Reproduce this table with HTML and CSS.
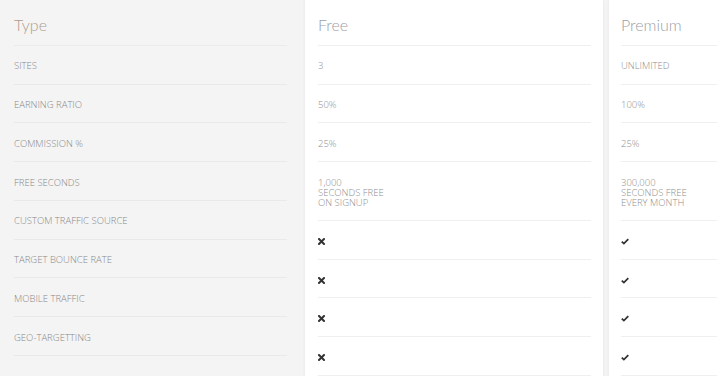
FILE: index.html
```html
<!DOCTYPE html>
<html>
<head>
<meta charset="utf-8">
<link rel="stylesheet" href="styles.css">
</head>
<body>
<div class="table">
  <div class="col col-type">
    <div class="head head-type">Type</div>
    <div class="row">SITES</div>
    <div class="row">EARNING RATIO</div>
    <div class="row">COMMISSION %</div>
    <div class="row">FREE SECONDS</div>
    <div class="row">CUSTOM TRAFFIC SOURCE</div>
    <div class="row">TARGET BOUNCE RATE</div>
    <div class="row">MOBILE TRAFFIC</div>
    <div class="row">GEO-TARGETTING</div>
  </div>
  <div class="col card">
    <div class="head">Free</div>
    <div class="row">3</div>
    <div class="row">50%</div>
    <div class="row">25%</div>
    <div class="row">1,000<br>SECONDS FREE<br>ON SIGNUP</div>
    <div class="row"><svg class="ico" viewBox="0 0 7 7"><path d="M1 1L6 6M6 1L1 6" /></svg></div>
    <div class="row"><svg class="ico" viewBox="0 0 7 7"><path d="M1 1L6 6M6 1L1 6" /></svg></div>
    <div class="row"><svg class="ico" viewBox="0 0 7 7"><path d="M1 1L6 6M6 1L1 6" /></svg></div>
    <div class="row"><svg class="ico" viewBox="0 0 7 7"><path d="M1 1L6 6M6 1L1 6" /></svg></div>
  </div>
  <div class="col card">
    <div class="head">Premium</div>
    <div class="row">UNLIMITED</div>
    <div class="row">100%</div>
    <div class="row">25%</div>
    <div class="row">300,000<br>SECONDS FREE<br>EVERY MONTH</div>
    <div class="row"><svg class="ico chk" viewBox="0 0 8 7"><path d="M0.8 3.6L2.9 5.6L7.3 1.2" /></svg></div>
    <div class="row"><svg class="ico chk" viewBox="0 0 8 7"><path d="M0.8 3.6L2.9 5.6L7.3 1.2" /></svg></div>
    <div class="row"><svg class="ico chk" viewBox="0 0 8 7"><path d="M0.8 3.6L2.9 5.6L7.3 1.2" /></svg></div>
    <div class="row"><svg class="ico chk" viewBox="0 0 8 7"><path d="M0.8 3.6L2.9 5.6L7.3 1.2" /></svg></div>
  </div>
</div>
</body>
</html>
```
FILE: styles.css
```css
html, body {
  margin: 0;
  padding: 0;
  overflow: hidden;
  background: #f4f4f4;
}
body {
  font-family: "Open Sans", "Liberation Sans", sans-serif;
  font-weight: 300;
}
.table {
  display: grid;
  grid-template-columns: 305px 298px 304px;
  width: 1000px;
  align-items: start;
}
.col {
  display: flex;
  flex-direction: column;
}
.col-type {
  padding: 0 18px 0 14px;
}
.card {
  background: #fff;
  box-shadow: 0 0 3px rgba(0, 0, 0, 0.07);
  padding: 0 12px 0 13px;
  min-height: 420px;
}
.card + .card {
  margin-left: 6px;
  padding-left: 12px;
}
.head {
  font-family: Lato, "Open Sans", sans-serif;
  font-weight: 300;
  font-size: 16px;
  line-height: 20px;
  padding: 15px 0 10px;
  color: #9ba0a8;
  border-bottom: 1px solid #efefef;
}
.head-type {
  color: #ad9c8c;
  border-bottom-color: #ebebeb;
}
.row {
  font-size: 9.5px;
  line-height: 10px;
  padding: 15.4px 0 12.35px;
  color: #8e8e8e;
  border-bottom: 1px solid #efefef;
}
.col-type .row {
  color: #888;
  border-bottom-color: #e9e9e9;
}
.ico {
  display: block;
  width: 7px;
  height: 7px;
  fill: none;
  stroke: #333;
  stroke-width: 2;
  stroke-linecap: square;
  margin: 1.5px 0 1.5px;
}
.chk {
  width: 8px;
  stroke-width: 1.8;
  stroke-linecap: butt;
}
```
